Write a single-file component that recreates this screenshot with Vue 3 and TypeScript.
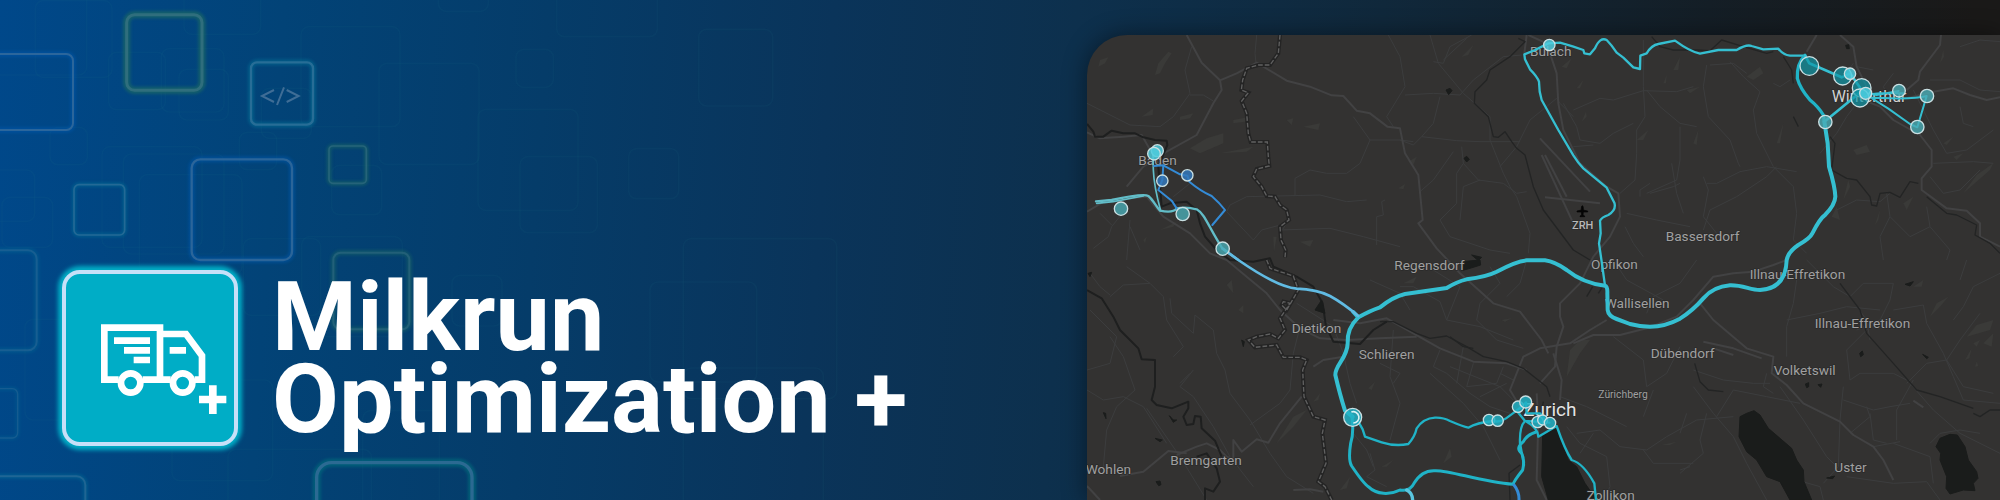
<script setup lang="ts">
interface Tile { x: number; y: number; w: number; h: number; r: number; tone: string; line: number; alpha: number }
interface Place { name: string; x: number; y: number; kind: string }
interface Stop { x: number; y: number; r: number; tone: string }
interface Route { d: string; tone: string; width: number }

const t = (x: number, y: number, w: number, h: number, r: number, tone: string, line: number, alpha = 1): Tile =>
  ({ x, y, w, h, r, tone, line, alpha })

const tiles: Tile[] = [
  t(-30, 162, 249, 228, 20, 'blue', 6),
  t(380, 44, 226, 227, 24, 'green', 9),
  t(753, 187, 186, 187, 18, 'cyan', 7),
  t(987, 438, 112, 112, 12, 'green', 5, 0.8),
  t(222, 554, 152, 151, 15, 'cyan', 5, 0.9),
  t(575, 478, 301, 302, 26, 'blue', 7),
  t(-60, 751, 170, 300, 26, 'cyan', 6, 0.6),
  t(1000, 758, 228, 230, 22, 'green', 6, 0.7),
  t(-60, 1166, 113, 148, 16, 'cyan', 4, 0.55),
  t(-60, 1429, 316, 200, 26, 'cyan', 6, 0.8),
  t(950, 1388, 466, 300, 44, 'teal', 10),
]

const ghosts: number[][] = [
  [106, 2, 230, 230], [-40, -60, 300, 285], [552, -80, 230, 183], [326, 157, 170, 172], [484, 146, 188, 190],
  [537, 208, 148, 152], [903, 80, 297, 300], [784, 265, 150, 150], [1137, 190, 300, 303], [150, 382, 112, 112],
  [718, 397, 112, 112], [306, 440, 300, 302], [370, 462, 302, 300], [418, 524, 308, 300], [-40, 510, 144, 154],
  [6, 592, 152, 150], [995, 496, 150, 148], [1434, 328, 300, 303], [1315, -60, 150, 94], [905, 710, 302, 300],
  [730, 716, 232, 230], [75, 958, 220, 302], [516, 1140, 302, 302], [684, 1348, 430, 300], [1088, 1232, 230, 320],
  [1356, 826, 150, 152], [1670, -80, 302, 190], [1548, 148, 112, 114], [2096, 88, 222, 230], [1560, 470, 232, 228],
  [1886, 446, 150, 150], [2050, 716, 460, 480], [1950, 846, 320, 300], [2050, 1104, 420, 440],
]

const primaryRoads: string[] = [
  'M320 45 365 128 420 181 470 160 530 128 620 182 690 200 755 226 790 228 830 272 870 280 922 320 960 325 975 400 1015 465 1028 600 1015 610 1070 685 1140 760 1240 850 1320 875 1385 960 1405 1000',
  'M420 181 425 210 400 250 350 345 260 395 190 440 140 500',
  'M21 337 60 355 130 350 185 345 205 380 240 440',
  'M21 575 80 540 200 530 250 590 330 640 390 700 440 720 500 770 560 820 600 870 660 925 720 955 800 960 900 955 1010 950',
  'M1340 45 1333 100 M1345 45 1400 70 1430 160 1435 250 1450 330 1500 430 1580 500 1615 520 1620 590 1590 650 1540 710 1500 790 1440 850 1440 890 1450 920 1430 980 1425 1040 1380 1090',
  'M760 900 840 910 920 895 1000 940 1080 985 1180 1025 1280 1030 1340 1050',
  'M1320 1160 1290 1110 1330 1010 1380 985 1470 970 1530 930 1580 900',
  'M1480 970 1540 945 1620 945 1700 925 1790 890 1840 840 1900 770 1960 760 2020 755 2080 735 2120 720',
  'M1860 850 1900 900 2000 985 2080 1010 2075 1060 2120 1095 2170 1150 2280 1205 2320 1245 2380 1280 2410 1320 2440 1380',
  'M1870 965 1960 985 2045 1015', 'M1900 985 1960 1005', 'M2500 1142 2530 1162',
  'M2210 45 2180 95', 'M2280 45 2320 80 2330 140 2360 200', 'M2583 45 2580 75 2520 155 2515 180 2480 210',
  'M2350 240 2400 260 2440 300 2520 345 2555 390 2555 440 2525 475 2525 510 2600 565 2660 572 2700 610 2700 650 2760 680',
  'M2480 235 2560 215 2620 205 2670 225 2720 240 2760 232',
  'M1380 355 1530 515', 'M1385 405 1480 610', 'M1395 405 1460 530', 'M1395 532 1560 550',
  'M290 1305 350 1280 380 1270 420 1290 440 1310 460 1320 460 1260 485 1295 530 1258 565 1268 600 1210 665 1130',
  'M120 1368 190 1355 265 1293 320 1300', 'M21 1398 60 1440', 'M640 1410 690 1408 730 1415',
  'M700 1040 730 1020 790 1010', 'M1370 1120 1375 1200 1370 1380 1400 1440', 'M1420 1000 1445 1080 1440 1140',
]

const minorRoads: string[] = [
  'M530 45 525 100 528 130', 'M335 80 315 150 330 220 280 290 240 320 150 315 21 250', 'M330 225 370 225 400 243',
  'M645 525 645 475 690 450 740 460 800 460 840 430 870 360 820 290', 'M870 360 960 360 1000 365', 'M500 530 720 525 800 545 860 540',
  'M500 530 450 555 440 575 520 660 545 630 620 610 600 640', 'M600 630 750 625 850 650 960 680', 'M890 675 890 590 910 585 905 545 915 540',
  'M135 570 95 620 85 650 40 685', 'M95 615 60 580', 'M150 620 180 690', 'M150 600 140 720', 'M280 530 330 490',
  'M925 45 960 110 975 200 920 290 940 320', 'M1050 45 1075 130 1150 220 1230 290 1230 360 1270 460 1290 500 1310 530 1350 640 1345 700',
  'M1175 45 1110 80 1090 130 1060 125', 'M1090 120 1160 55', 'M975 225 1060 220 1140 225 1180 180 1270 110 1325 105',
  'M1080 230 1060 310 1025 350 1000 375 960 360', 'M1025 350 1130 362 1200 365 1320 365', 'M1145 380 1150 430 1130 460 1130 550 1080 600 1110 650 1230 690 1290 700',
  'M1120 395 1060 480 1020 515', 'M1200 480 1150 500 1140 600', 'M1150 430 1195 480 1270 490 1310 520 1340 515', 'M1260 440 1310 380 1350 300 1430 235 1440 250 1480 290',
  'M1480 270 1560 235 1600 240 1690 212 1790 215 1840 200', 'M1450 250 1490 320 1500 360 1560 370 1600 340 1660 310',
  'M1690 60 1690 200 1695 290 1670 330 1670 400 1665 480 1620 520', 'M1700 210 1740 260 1800 310 1850 320', 'M1800 320 1800 420 1790 480 1700 520',
  'M1480 380 1540 375', 'M1710 490 1680 510 1680 530', 'M1800 490 1780 500 1710 520', 'M1775 430 1790 520 1810 580', 'M1640 580 1730 600 1830 620',
  'M1635 620 1660 670 1690 710', 'M1870 470 1885 510 1870 590 1910 640', 'M1880 490 1910 490 1980 455 2060 440 2150 455', 'M1890 135 1960 130 2000 160',
  'M1880 135 1870 200 1885 290 1950 360 1975 430 1980 440', 'M1950 125 1990 170 2040 215 2020 270 2030 340 2080 440 2140 500 2150 580 2140 660 2180 700', 'M2090 440 2060 470 1970 530 1890 570 1870 630',
  'M2130 180 2100 200 2080 190', 'M2330 140 2380 150', 'M2360 210 2300 290 2270 340 2220 400', 'M2300 210 2360 250', 'M2550 180 2640 180 2700 210 2760 215', 'M2320 130 2290 170',
  'M2500 210 2560 330 2600 400 2660 390 2740 330', 'M2560 430 2680 425 2740 430', 'M2550 470 2590 520 2640 510 2700 450', 'M2640 260 2650 310 2680 320', 'M2270 570 2330 540 2400 545 2430 520',
  'M2420 520 2430 590 2490 650 2550 620 2540 560', 'M2430 590 2400 650 2410 720', 'M2550 620 2610 690 2600 720', 'M2640 80 2700 60 2760 65', 'M2440 160 2410 200 2430 240',
  'M90 825 60 800 30 760', 'M90 830 130 795 210 790 250 830 260 900 310 980 280 1010', 'M210 790 140 740', 'M270 835 275 880 340 940 345 885 400 930 410 1000 435 1050 450 1120 510 1200 570 1300 620 1370 700 1420',
  'M340 1050 300 1100 340 1130 400 1220 450 1310 520 1400', 'M300 1090 330 1060', 'M30 870 110 950 90 1030 21 1050', 'M21 1110 70 1140 130 1130 190 1160 260 1270', 'M90 950 130 1010 165 1110 110 1160 80 1230 70 1340',
  'M200 1165 300 1310 380 1440', 'M510 1215 600 1150 630 1110 640 1000 660 920', 'M650 850 760 920 790 1000 810 1090 830 1150', 'M870 1300 885 1350 860 1370 920 1400',
  'M940 930 930 1070 960 1150 930 1260', 'M820 1240 860 1290 880 1340', 'M870 780 960 820 990 870', 'M960 800 1000 800 1080 845 1100 900 1200 920 1300 960',
  'M1230 740 1260 790 1200 850 1190 900 1250 960 1330 985', 'M1060 750 1140 800 1100 900', 'M1340 720 1320 790 1280 830', 'M1600 720 1640 780 1750 840', 'M1850 720 1800 790 1720 830 1700 880',
  'M1080 990 1060 1040 1100 1060 1170 1120 1230 1160 1290 1180', 'M1150 980 1130 1090', 'M1050 1060 1150 1150 1210 1220 1260 1320', 'M1110 1040 1260 1100 1300 1140', 'M1180 1030 1160 1100 1250 1090 1270 1040',
  'M1280 1090 1200 1130', 'M1260 1060 1300 1080', 'M1440 1130 1520 1160 1600 1200 1640 1220', 'M1460 1220 1500 1270 1580 1310 1590 1400 1570 1440', 'M1490 1240 1560 1230 1620 1280 1700 1290 1760 1250 1850 1200 1960 1190',
  'M1500 1300 1540 1240', 'M1690 1290 1720 1330 1840 1330', 'M1600 950 1690 1020 1700 1100 1760 1060 1800 980', 'M1720 1110 1690 1190', 'M900 1030 960 1060 940 1090',
  'M1840 1100 1900 1180 1960 1250 2000 1330 2060 1440', 'M1880 1180 1860 1260 1870 1300 1800 1360', 'M1910 1190 1960 1110 2060 1130 2160 1150', 'M1840 1050 1930 1080 2020 1090 2070 1090', 'M2080 1120 2050 1100 2060 1060',
  'M2150 780 2140 850 2120 920 2120 1010', 'M2120 900 2220 880 2300 860 2400 870', 'M2180 720 2260 800 2310 830 2360 900 2370 960', 'M2370 920 2300 990 2310 1080 2340 1060 2440 1060 2480 1080',
  'M2310 830 2350 790 2440 790 2430 840 2400 900 2330 930', 'M2480 1090 2540 1030 2600 1020 2640 960 2700 880', 'M2440 870 2530 855 2540 910 2590 1000 2620 1070 2650 1140 2760 1150', 'M2600 1020 2650 1100 2740 1120',
  'M2490 1090 2560 1170 2640 1240 2760 1300', 'M2500 1080 2450 1170 2450 1260', 'M2290 1140 2380 1170 2430 1160 2490 1150', 'M2290 1100 2280 1200 2275 1340 2230 1390', 'M2100 1100 2170 1200 2240 1310 2270 1340',
  'M2300 1370 2440 1390 2540 1385 2580 1440', 'M2550 1270 2580 1240 2640 1230 2700 1240', 'M2310 1240 2370 1190 2360 1160', 'M2370 1180 2380 1260 2420 1270', 'M2150 1380 2220 1400 2230 1440', 'M2560 1390 2550 1310 2440 1270',
  'M2760 760 2680 800 2650 860 2620 900', 'M2660 720 2640 780', 'M2380 1280 2460 1265', 'M1820 1180 1800 1240', 'M1800 1350 1830 1340',
]

const rivers: string[] = [
  'M21 312 40 335 45 350 70 350 95 332 130 340 165 340 190 352 225 360 260 362 262 375 235 440 240 500 245 560 270 550 320 545 350 570 360 610 375 650 410 690 450 720 520 725 570 715 580 740 650 770 700 800 728 850 738 920 760 965 840 972 880 930 920 905',
  'M21 810 65 835 100 890 120 930 175 985 185 1018 225 1020 225 1100 215 1140 230 1155 275 1165 325 1145 325 1165 310 1190 320 1215 340 1212 345 1188 362 1190 365 1225 405 1262 425 1310',
  'M350 1310 380 1300 410 1345 420 1385 400 1415 375 1405 375 1440',
]

const streams: string[] = [
  'M1315 55 1335 65 1290 110 1230 150 1220 180 1185 215 1183 250 1225 290 1240 350 1255 352 1275 335 1295 365 1310 385 1335 405 1360 500 1390 570 1480 690 1530 720',
  'M900 905 940 905 1010 940 1050 955 1100 948 1160 980 1210 1010 1280 1025 1330 1045 1400 1100 1410 1130',
  'M1110 950 1150 980 1180 985', 'M1715 50 1740 80 1780 90 1850 90 1890 92 1925 60 1990 80 2060 100 2080 95',
  'M2110 110 2135 150 2140 190', 'M2250 350 2265 370 2255 450 2300 475 2330 480 2370 530 2375 555 2390 558 2400 520 2430 517 2460 532 2490 485 2515 490',
  'M2540 530 2600 580 2630 585 2690 615 2685 645 2730 670 2760 700', 'M2140 290 2155 320', 'M1844 1030 1860 1085 1885 1110 1930 1115', 'M1520 830 1538 800', 'M1555 820 1568 800',
  'M2280 790 2340 870 2360 940 2440 1030 2510 1110 2580 1130 2680 1165', 'M1290 1440 1287 1360 1320 1335', 'M2680 1180 2700 1190 2730 1170 2760 1170', 'M1390 1145 1385 1170',
]

const lakes: string[] = [
  'M1388 1240 1430 1222 1445 1270 1465 1320 1490 1340 1515 1390 1550 1440 1405 1440 1385 1370Z',
  'M1980 1190 2000 1180 2022 1172 2040 1185 2065 1225 2100 1255 2135 1285 2150 1320 2170 1350 2172 1385 2195 1440 2130 1440 2100 1385 2060 1370 2030 1320 2000 1295 1977 1250Z',
  'M2568 1280 2580 1255 2610 1243 2632 1245 2655 1280 2665 1320 2690 1355 2694 1375 2680 1390 2685 1412 2650 1410 2610 1422 2598 1405 2600 1370 2580 1320 2582 1300Z',
  'M1145 725 1200 720 1202 735 1170 745 1145 752Z', 'M1175 705 1205 712 1195 722Z', 'M2475 793 2500 785 2490 798Z', 'M2339 1000 2347 993 2350 1004 2342 1010Z',
  'M2528 1003 2545 1012 2540 1016Z', 'M2176 1092 2186 1088 2186 1100 2180 1103Z', 'M2214 1094 2226 1092 2222 1102Z', 'M2240 1374 2264 1368 2258 1376Z',
  'M225 1255 247 1260 240 1265Z', 'M228 1385 240 1383 243 1394 236 1397Z', 'M70 1178 77 1180 78 1196Z', 'M24 760 35 757 30 770Z', 'M1098 210 1110 205 1116 212 1106 224Z', 'M1152 415 1160 409 1168 418 1160 426Z',
  'M2297 76 2306 74 2308 86 2300 86Z', 'M485 960 493 965 490 980Z', 'M268 1187 280 1200 290 1200 280 1207Z', 'M705 870 725 840 735 880Z',
]

const woods: string[] = [
  'M225 165 235 130 265 95 275 100 255 130 240 160Z', 'M55 140 60 120 85 112 75 130Z', 'M300 290 340 280 330 295 300 300Z', 'M330 385 380 355 430 340 430 370 360 400Z', 'M185 290 220 265 218 285Z',
  'M460 300 510 290 495 305 460 310Z', 'M620 300 640 295 635 315Z', 'M670 320 720 310 715 330Z', 'M420 400 520 380 500 395Z', 'M190 660 200 650 195 670Z', 'M240 630 290 605 280 620Z', 'M660 665 700 660 690 680Z', 'M580 650 590 650 582 695Z',
  'M1145 110 1180 75 1165 105Z', 'M985 425 1010 410 1000 435Z', 'M955 505 975 492 970 508Z', 'M1445 140 1475 115 1460 145Z', 'M1490 205 1510 180 1500 205Z', 'M1670 360 1705 330 1690 360Z', 'M1505 305 1518 275 1520 290Z', 'M1750 190 1760 165 1758 190Z', 'M1780 150 1800 110 1795 150Z', 'M1820 210 1860 200 1830 220Z',
  'M1840 370 1855 330 1850 375Z', 'M2000 170 2040 140 2050 160 2020 180Z', 'M2290 540 2305 480 2310 500Z', 'M2255 590 2270 560 2280 600Z', 'M2385 615 2400 570 2395 600Z', 'M2090 370 2110 310 2100 370Z', 'M2590 370 2620 350 2600 375Z', 'M2650 520 2690 465 2740 430 2730 450Z', 'M2580 130 2590 90 2592 110Z', 'M2620 410 2650 400 2630 420Z', 'M2320 390 2360 375 2370 395 2330 405Z', 'M2470 550 2500 530 2480 570Z',
  'M440 795 455 780 460 820Z', 'M475 870 490 855 490 880Z', 'M590 1270 640 1190 680 1170 640 1220Z', 'M865 1105 885 1085 875 1110Z', 'M700 1145 720 1120 715 1140Z', 'M780 1410 810 1370 800 1405Z', 'M1460 1070 1470 990 1500 960 1530 960 1500 1000Z', 'M1090 1330 1110 1285 1115 1310Z', 'M905 1340 940 1320 920 1340Z', 'M1745 1275 1790 1265 1770 1275Z', 'M970 790 1010 770 1000 790Z', 'M1265 900 1295 895 1275 905Z',
  'M2550 890 2570 850 2605 830 2580 860Z', 'M2500 800 2530 780 2525 800Z', 'M2660 950 2690 915 2740 900 2730 930Z', 'M2710 970 2740 940 2735 980Z', 'M2655 1020 2675 985 2668 1015Z', 'M2680 970 2700 960 2690 980Z', 'M2685 1040 2690 1025 2695 1038Z',
]

const border = 'M600 45 595 100 570 135 535 135 500 145 488 180 484 210 505 218 485 243 500 280 505 340 512 366 562 366 565 410 568 438 530 447 520 470 545 500 560 528 585 530 600 555 620 570 627 600 600 620 603 660 617 690 615 712 M560 720 570 745 640 768 655 810 620 870 605 855 610 845 630 850 600 895 615 930 595 955 570 942 530 950 505 960 525 982 590 975 610 1012 660 1012 680 1020 668 1050 672 1130 700 1190 735 1200 727 1240 738 1330 715 1385 735 1400 755 1440'

const routes: Route[] = [
  { d: 'M820 876 835 892 Q870 872 900 862 Q940 830 975 822 L1100 804 Q1130 785 1160 778 Q1220 770 1250 755 Q1310 723 1340 721 H1395 Q1425 725 1460 750 Q1510 790 1575 797 Q1583 800 1582 820 L1583 870 Q1585 888 1610 897 L1650 912 Q1680 920 1710 920 Q1755 920 1800 896 Q1840 870 1870 835 Q1900 800 1950 796 C1990 795 2010 810 2040 810 C2080 808 2118 790 2120 720 Q2125 695 2155 675 Q2190 655 2197 640 Q2220 595 2235 585 Q2265 555 2266 530 Q2265 500 2247 440 L2243 370 2233 305', tone: 'main', width: 12 },
  { d: 'M835 892 Q800 925 803 970 C802 1015 765 1035 766 1065 Q780 1125 795 1172 L818 1190', tone: 'main', width: 12 },
  { d: 'M816 1190 Q822 1240 812 1270 Q804 1320 815 1338 Q850 1390 865 1400 C890 1425 930 1425 960 1410 Q990 1415 1002 1390 Q1025 1350 1065 1352 C1110 1350 1200 1385 1300 1393 Q1300 1385 1328 1350 Q1335 1320 1325 1300 Q1305 1285 1330 1265 Q1340 1245 1368 1236', tone: 'deep', width: 9 },
  { d: 'M835 1205 848 1228 855 1250 905 1267 Q945 1280 985 1272 Q1005 1250 1010 1225 Q1030 1195 1065 1193 Q1090 1192 1110 1203 Q1150 1220 1165 1223 Q1190 1208 1240 1203 Q1260 1208 1278 1195 L1310 1172 1338 1148', tone: 'deep', width: 7 },
  { d: 'M1310 1172 1335 1203 1370 1205 1408 1208 M1338 1148 1340 1180 1380 1180 1400 1205 M1335 1203 Q1318 1220 1320 1270 L1332 1335 M1340 1205 Q1375 1225 1375 1250 L1430 1218 Q1455 1290 1475 1320 Q1510 1330 1543 1390 L1548 1440', tone: 'deep', width: 7 },
  { d: 'M980 1410 Q998 1420 998 1440', tone: 'light', width: 10 },
  { d: 'M1302 1395 Q1318 1415 1317 1440', tone: 'blue', width: 9 },
  { d: 'M1575 797 1565 725 1557 670 1562 640 1560 602 Q1565 592 1585 585 Q1610 570 1603 548 L1580 503 1510 445 Q1495 430 1480 406 L1435 330 1385 240 Q1377 215 1377 185 Q1372 170 1350 148 L1335 118 1333 103 1365 90 1405 70 1440 68 1478 79 1510 90 1513 100 1530 103 1545 85 Q1560 50 1580 60 Q1595 75 1610 98 L1630 113 1660 142 1680 147 1681 107 1700 100 Q1715 75 1735 72 L1785 62 Q1830 95 1860 101 L1915 90 1970 90 Q2000 72 2015 78 L2050 88 2095 86 Q2110 105 2130 107 H2175', tone: 'main', width: 7 },
  { d: 'M2175 106 Q2150 130 2152 175 Q2160 205 2190 240 Q2215 260 2230 285 L2233 305', tone: 'deep', width: 10 },
  { d: 'M2175 106 2188 130 2285 172 2310 160 2345 210 2330 226 2233 305', tone: 'main', width: 8 },
  { d: 'M2340 215 2390 225 2456 213 M2340 225 2400 220 2470 220 M2355 232 Q2500 240 2540 228 L2512 322 2490 312 2425 266 2360 225', tone: 'main', width: 6 },
  { d: 'M48 544 95 540 Q190 520 205 528 C220 540 228 560 240 572 Q280 580 290 565 Q320 560 350 568 C375 582 385 620 427 685 Q460 710 475 720', tone: 'pale', width: 7 },
  { d: 'M50 550 100 545 190 528 M219 405 220 450 Q222 500 242 572', tone: 'pale', width: 5 },
  { d: 'M427 685 475 720 Q590 800 650 806 Q710 808 750 828 Q790 850 835 888', tone: 'sky', width: 8 },
  { d: 'M222 438 250 436 300 463 322 467 M250 436 247 480 235 510 275 542 290 565 M322 467 328 485 Q360 512 395 528 Q420 550 435 570 L397 615', tone: 'blue', width: 6 },
]

const stops: Stop[] = [
  { x: 232, y: 392, r: 18, tone: 'bright' }, { x: 222, y: 401, r: 19, tone: 'bright' },
  { x: 247, y: 482, r: 17, tone: 'navy' }, { x: 322, y: 466, r: 17, tone: 'navy' },
  { x: 123, y: 566, r: 20, tone: 'muted' }, { x: 308, y: 582, r: 20, tone: 'muted' }, { x: 428, y: 686, r: 20, tone: 'muted' },
  { x: 818, y: 1192, r: 27, tone: 'full' }, { x: 1408, y: 75, r: 17, tone: 'bright' },
  { x: 2188, y: 138, r: 28, tone: 'deep' }, { x: 2288, y: 168, r: 27, tone: 'deep' }, { x: 2310, y: 161, r: 17, tone: 'bright' },
  { x: 2345, y: 204, r: 28, tone: 'deep' }, { x: 2340, y: 234, r: 27, tone: 'deep' }, { x: 2357, y: 220, r: 18, tone: 'bright' },
  { x: 2457, y: 212, r: 19, tone: 'muted' }, { x: 2541, y: 228, r: 20, tone: 'muted' }, { x: 2512, y: 321, r: 20, tone: 'muted' },
  { x: 2236, y: 306, r: 20, tone: 'muted' },
  { x: 1227, y: 1200, r: 17, tone: 'full' }, { x: 1253, y: 1202, r: 17, tone: 'full' }, { x: 1314, y: 1160, r: 17, tone: 'full' }, { x: 1337, y: 1146, r: 18, tone: 'full' },
  { x: 1373, y: 1206, r: 17, tone: 'full' }, { x: 1388, y: 1200, r: 15, tone: 'full' }, { x: 1410, y: 1209, r: 17, tone: 'full' },
]

const places: Place[] = [
  { name: 'Baden', x: 175, y: 435, kind: 'town' }, { name: 'Bülach', x: 1350, y: 109, kind: 'town' },
  { name: 'Winterthur', x: 2255, y: 246, kind: 'city' }, { name: 'ZRH', x: 1476, y: 628, kind: 'airport' },
  { name: 'Bassersdorf', x: 1757, y: 663, kind: 'town' }, { name: 'Opfikon', x: 1533, y: 746, kind: 'town' },
  { name: 'Regensdorf', x: 943, y: 751, kind: 'town' }, { name: 'Dietikon', x: 635, y: 939, kind: 'town' },
  { name: 'Schlieren', x: 836, y: 1017, kind: 'town' }, { name: 'Wallisellen', x: 1574, y: 865, kind: 'town' },
  { name: 'Dübendorf', x: 1712, y: 1014, kind: 'town' }, { name: 'Illnau-Effretikon', x: 2009, y: 777, kind: 'town' },
  { name: 'Illnau-Effretikon', x: 2204, y: 924, kind: 'town' }, { name: 'Volketswil', x: 2081, y: 1066, kind: 'town' },
  { name: 'Zürichberg', x: 1555, y: 1133, kind: 'hill' }, { name: 'Bremgarten', x: 271, y: 1336, kind: 'town' },
  { name: 'Wohlen', x: 17, y: 1362, kind: 'town' }, { name: 'Uster', x: 2263, y: 1357, kind: 'town' },
  { name: 'Zollikon', x: 1520, y: 1441, kind: 'town' }, { name: 'Zurich', x: 1330, y: 1187, kind: 'capital' },
]
</script>

<template>
  <main class="banner">
    <svg class="decor" viewBox="0 0 6000 1500" preserveAspectRatio="xMinYMin slice" aria-hidden="true">
      <rect v-for="(g, i) in ghosts" :key="'g' + i" class="ghost" :x="g[0]" :y="g[1]" :width="g[2]" :height="g[3]" rx="24" />
      <g v-for="(s, i) in tiles" :key="'t' + i" :class="['tile', s.tone]" :opacity="s.alpha">
        <rect class="halo" :x="s.x" :y="s.y" :width="s.w" :height="s.h" :rx="s.r" :stroke-width="s.line * 2 + 4" />
        <rect class="edge" :x="s.x" :y="s.y" :width="s.w" :height="s.h" :rx="s.r" :stroke-width="s.line" />
      </g>
      <path class="code" d="M822 270 786 288 822 306 M852 262 831 315 M860 270 896 288 860 306" />
    </svg>

    <section class="intro">
      <div class="badge">
        <svg class="truck" viewBox="198 71 504 504" aria-hidden="true">
          <path class="outline" d="M356 388H313V232H480V388H428 M480 251H558L606 316V388H584 M512 388H480" />
          <circle class="outline" cx="392" cy="398" r="29" />
          <circle class="outline" cx="548" cy="398" r="29" />
          <path class="solid" d="M342 261H450V281H342Z M372 290H450V310H372Z M401 319H450V339H401Z M509 290H558V310H509Z" />
          <path class="solid" d="M627 405H650V436H679V459H650V491H627V459H597V436H627Z" />
        </svg>
      </div>
      <h1 class="title">Milkrun<br />Optimization +</h1>
    </section>

    <section class="map-card" aria-label="Route map">
      <svg class="map" viewBox="21 45 2739 1395" preserveAspectRatio="xMinYMin slice">
        <path v-for="(d, i) in woods" :key="'w' + i" class="wood" :d="d" />
        <path v-for="(d, i) in minorRoads" :key="'m' + i" class="road minor" :d="d" />
        <path v-for="(d, i) in primaryRoads" :key="'p' + i" class="road primary" :d="d" />
        <path v-for="(d, i) in streams" :key="'s' + i" class="river stream" :d="d" />
        <path v-for="(d, i) in rivers" :key="'r' + i" class="river" :d="d" />
        <path v-for="(d, i) in lakes" :key="'l' + i" class="lake" :d="d" />
        <path class="border-shade" :d="border" />
        <path class="border-dash" :d="border" />
        <path class="plane" d="M1507 557 q3 0 3 8 v5 l13 3 v3 l-13 0 -1 9 5 3 v2 h-14 v-2 l5 -3 -1 -9 -13 0 v-3 l13 -3 v-5 q0 -8 3 -8Z" />
        <text v-for="(p, i) in places" :key="'n' + i" :class="['label', p.kind]" :x="p.x" :y="p.y">{{ p.name }}</text>
        <path v-for="(r, i) in routes" :key="'q' + i" :class="['route', r.tone]" :d="r.d" :stroke-width="r.width" />
        <circle v-for="(s, i) in stops" :key="'c' + i" :class="['stop', s.tone]" :cx="s.x" :cy="s.y" :r="s.r" />
        <path class="ring" d="M814 1176 A17 17 0 1 1 820 1209" />
      </svg>
    </section>
  </main>
</template>

<style>
body {
  margin: 0;
}
</style>

<style scoped>
.banner {
  position: relative;
  display: grid;
  grid-template-columns: minmax(0, 1087fr) minmax(0, 913fr);
  min-height: 100vh;
  overflow: hidden;
  font-family: Roboto, "Liberation Sans", sans-serif;
  background: linear-gradient(94deg, #00488a 0%, #024377 14%, #053c69 27%, #0a345a 41%, #0d304d 53%, #10283b 68%, #141e26 84%, #1a1918 97%);
}
.decor {
  position: absolute;
  inset: 0;
  width: 100%;
  height: 100%;
}
.ghost {
  fill: none;
  stroke: #2c7a90;
  stroke-width: 5;
  opacity: 0.07;
}
.halo,
.edge {
  fill: none;
}
.halo {
  opacity: 0.45;
  filter: blur(4px);
}
.edge {
  stroke: #3b6f9c;
  opacity: 0.72;
}
.blue .halo { stroke: #005bb4; }
.green .halo { stroke: #1c6a64; opacity: 0.7; }
.cyan .halo { stroke: #04799b; }
.teal .halo { stroke: #00727e; opacity: 0.6; }
.green .edge { stroke: #3a7583; }
.cyan .edge { stroke: #36759d; }
.code {
  fill: none;
  stroke: #3f6d96;
  stroke-width: 6;
}
.intro {
  position: relative;
  display: flex;
  align-items: center;
  align-self: end;
  gap: 34px;
  padding: 0 0 54px 62px;
}
.badge {
  flex: none;
  box-sizing: border-box;
  width: 176px;
  height: 176px;
  border: 4px solid #c6e0f8;
  border-radius: 18px;
  background: #00adc6;
  box-shadow: 0 0 4px 4px #00adc6;
}
.truck {
  display: block;
  width: 100%;
}
.outline {
  fill: none;
  stroke: #fff;
  stroke-width: 20;
}
.solid {
  fill: #fff;
}
.title {
  margin: 0;
  color: #fff;
  font-size: 97px;
  font-weight: 700;
  line-height: 82px;
  white-space: nowrap;
}
.map-card {
  position: relative;
  margin-top: 35px;
  overflow: hidden;
  border-top-left-radius: 40px;
  background: #333231;
  box-shadow: 0 0 24px rgba(0, 0, 0, 0.45);
}
.map {
  position: absolute;
  inset: 0;
  width: 100%;
  height: 100%;
}
.road {
  fill: none;
  stroke-linejoin: round;
}
.minor {
  stroke: #3c3d3e;
  stroke-width: 3;
}
.primary {
  stroke: #424243;
  stroke-width: 6;
}
.wood {
  fill: #3a3a38;
}
.river {
  fill: none;
  stroke: #1e1f1f;
  stroke-width: 6;
  stroke-linejoin: round;
}
.river.stream {
  stroke: #232424;
  stroke-width: 4;
}
.lake {
  fill: #1a1c1b;
  stroke: #1a1c1b;
  stroke-width: 3;
  stroke-linejoin: round;
}
.border-shade {
  fill: none;
  stroke: #242424;
  stroke-width: 12;
}
.border-dash {
  fill: none;
  stroke: #606060;
  stroke-width: 4;
  stroke-dasharray: 14 6;
}
.plane {
  fill: #050505;
  stroke: #050505;
  stroke-width: 2;
}
.label {
  fill: #a0a0a0;
  stroke: #2a2a2a;
  stroke-width: 4;
  paint-order: stroke;
  font-size: 41px;
}
.hill {
  font-size: 31px;
}
.airport {
  font-size: 33px;
  font-weight: 500;
  fill: #b8b8b8;
}
.city {
  font-size: 48px;
  fill: #d2d2d2;
}
.capital {
  font-size: 57px;
  fill: #e4e4e4;
}
.route {
  fill: none;
  stroke-linejoin: round;
  stroke-linecap: round;
}
.route.main { stroke: #35bfd1; }
.route.deep { stroke: #20b3c7; }
.route.light { stroke: #5ac5de; }
.route.pale { stroke: #62bdc8; }
.route.sky { stroke: #61bbe3; }
.route.blue { stroke: #348bd6; }
.stop {
  stroke: #c9dfe2;
  stroke-width: 4;
}
.stop.bright { fill: rgba(77, 203, 221, 0.85); }
.stop.muted { fill: rgba(73, 171, 181, 0.8); }
.stop.deep { fill: rgba(16, 151, 168, 0.7); }
.stop.full { fill: rgba(34, 178, 197, 0.85); }
.stop.navy { fill: rgba(52, 120, 187, 0.85); }
.ring {
  fill: none;
  stroke: #d7f2f5;
  stroke-width: 5;
}
</style>
